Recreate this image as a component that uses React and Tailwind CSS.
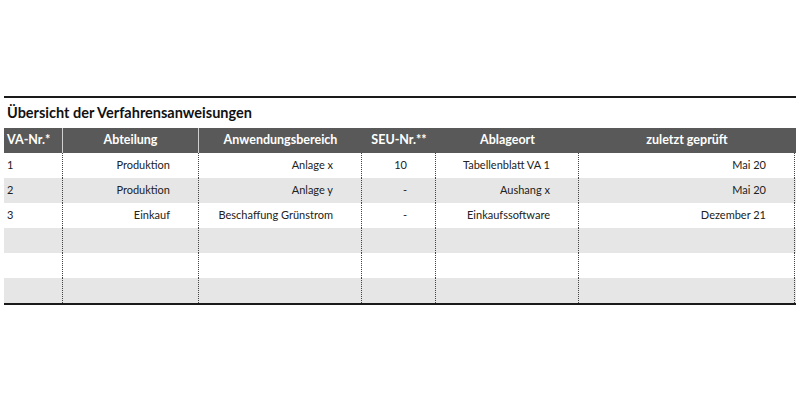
const COLS = 'grid grid-cols-[59px_136px_163px_74px_143px_216px]';

const HEADERS = ['VA-Nr.*', 'Abteilung', 'Anwendungsbereich', 'SEU-Nr.**', 'Ablageort', 'zuletzt geprüft'];

const ROWS = [
  ['1', 'Produktion', 'Anlage x', '10', 'Tabellenblatt VA 1', 'Mai 20'],
  ['2', 'Produktion', 'Anlage y', '-', 'Aushang x', 'Mai 20'],
  ['3', 'Einkauf', 'Beschaffung Grünstrom', '-', 'Einkaufssoftware', 'Dezember 21'],
  ['', '', '', '', '', ''],
  ['', '', '', '', '', ''],
  ['', '', '', '', '', ''],
];

export default function App() {
  return (
    <div className="w-[800px] h-[400px] bg-white font-['Lato','Liberation_Sans',sans-serif] text-[#222]">
      <div className="pt-[96px] pl-[4px]">
        <div className="w-[792px] border-t-2 border-[#1a1a1a]">
          {/* Titel */}
          <div className="h-[30px] flex items-center pl-[3px] pb-[1px] text-[14.5px] font-bold text-[#111]">
            Übersicht der Verfahrensanweisungen
          </div>

          {/* Kopfzeile */}
          <div className={`${COLS} h-[25px] bg-[#595959] text-white text-[12.5px] font-bold`}>
            {HEADERS.map((h, i) => (
              <div
                key={h}
                className={
                  i === 0
                    ? 'flex items-center pl-[3px] border-r border-[#d0d0d0]'
                    : i === 1
                      ? 'flex items-center justify-center border-r border-[#d0d0d0]'
                      : 'flex items-center justify-center'
                }
              >
                {h}
              </div>
            ))}
          </div>

          {/* Daten */}
          <div className="border-b-2 border-[#1a1a1a]">
            {ROWS.map((row, r) => (
              <div
                key={r}
                className={`${COLS} h-[25px] text-[11px] ${r % 2 === 1 ? 'bg-[#e6e6e6]' : 'bg-white'}`}
              >
                {row.map((cell, c) => (
                  <div
                    key={c}
                    className={
                      c === 0
                        ? 'flex items-center pl-[3px] border-r border-dotted border-[#444]'
                        : 'flex items-center justify-end pr-[28px] border-r border-dotted border-[#444]'
                    }
                  >
                    {cell}
                  </div>
                ))}
              </div>
            ))}
          </div>
        </div>
      </div>
    </div>
  );
}
